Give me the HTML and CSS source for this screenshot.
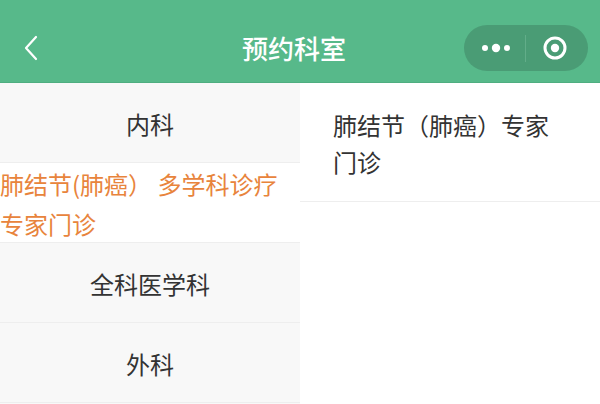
FILE: index.html
```html
<!DOCTYPE html>
<html lang="zh-CN">
<head>
<meta charset="utf-8">
<title>预约科室</title>
<link rel="stylesheet" href="styles.css">
</head>
<body>
<header class="navbar">
  <div class="nav-left">
    <svg class="back" width="16" height="26" viewBox="0 0 16 26"><path d="M13 2 L3 13 L13 24" fill="none" stroke="#fff" stroke-width="2.2" stroke-linecap="round" stroke-linejoin="round"/></svg>
  </div>
  <h1 class="nav-title">预约科室</h1>
  <div class="capsule">
    <div class="cap-btn">
      <svg width="40" height="12" viewBox="0 0 40 12"><circle cx="9" cy="6" r="3" fill="#fff"/><circle cx="20" cy="6" r="4.2" fill="#fff"/><circle cx="31" cy="6" r="3" fill="#fff"/></svg>
    </div>
    <div class="cap-divider"></div>
    <div class="cap-btn">
      <svg width="26" height="26" viewBox="0 0 26 26"><circle cx="13" cy="13" r="10" fill="none" stroke="#fff" stroke-width="3"/><circle cx="13" cy="13" r="4.2" fill="#fff"/></svg>
    </div>
  </div>
</header>
<main class="content">
  <nav class="dept-list">
    <div class="dept">内科</div>
    <div class="dept active">肺结节(肺癌） 多学科诊疗专家门诊</div>
    <div class="dept">全科医学科</div>
    <div class="dept">外科</div>
  </nav>
  <section class="clinic-list">
    <div class="clinic">肺结节（肺癌）专家门诊</div>
  </section>
</main>
</body>
</html>
```
FILE: styles.css
```css
* { box-sizing: border-box; margin: 0; padding: 0; }
html, body { width: 600px; height: 404px; overflow: hidden; }
body {
  background: #ffffff;
  font-family: "Noto Sans CJK SC", "Noto Sans", sans-serif;
  color: #333333;
}
.navbar {
  height: 83px;
  padding-top: 14px;
  background: #57b98a;
  border-bottom: 1px solid #4fae80;
  display: flex;
  align-items: center;
}
.nav-left {
  width: 60px;
  padding-left: 23px;
  display: flex;
  align-items: center;
}
.nav-title {
  flex: 1;
  text-align: center;
  color: #ffffff;
  font-size: 26px;
  font-weight: 500;
  line-height: 30px;
  margin-left: 64px;
}
.capsule {
  width: 124px;
  height: 46px;
  border-radius: 23px;
  background: #4a9c75;
  margin-right: 12px;
  display: flex;
  align-items: center;
}
.cap-btn {
  flex: 1;
  display: flex;
  align-items: center;
  justify-content: center;
}
.cap-btn:first-child { padding-left: 3px; }
.cap-btn:last-child { padding-right: 4px; }
.cap-divider {
  width: 1px;
  height: 27px;
  background: #62ad89;
}
.content {
  display: flex;
  height: 321px;
}
.dept-list {
  width: 300px;
  background: #f8f8f8;
}
.dept {
  height: 80px;
  border-bottom: 1px solid #eeeeee;
  display: flex;
  align-items: center;
  justify-content: center;
  font-size: 24px;
  line-height: 40px;
  padding-top: 3px;
  text-align: center;
}
.dept.active {
  background: #ffffff;
  color: #e8843c;
  justify-content: flex-start;
  text-align: left;
}
.clinic-list {
  flex: 1;
  background: #ffffff;
}
.clinic {
  padding: 23px 40px 21px 33px;
  font-size: 24px;
  line-height: 37px;
  border-bottom: 1px solid #eeeeee;
}
```
